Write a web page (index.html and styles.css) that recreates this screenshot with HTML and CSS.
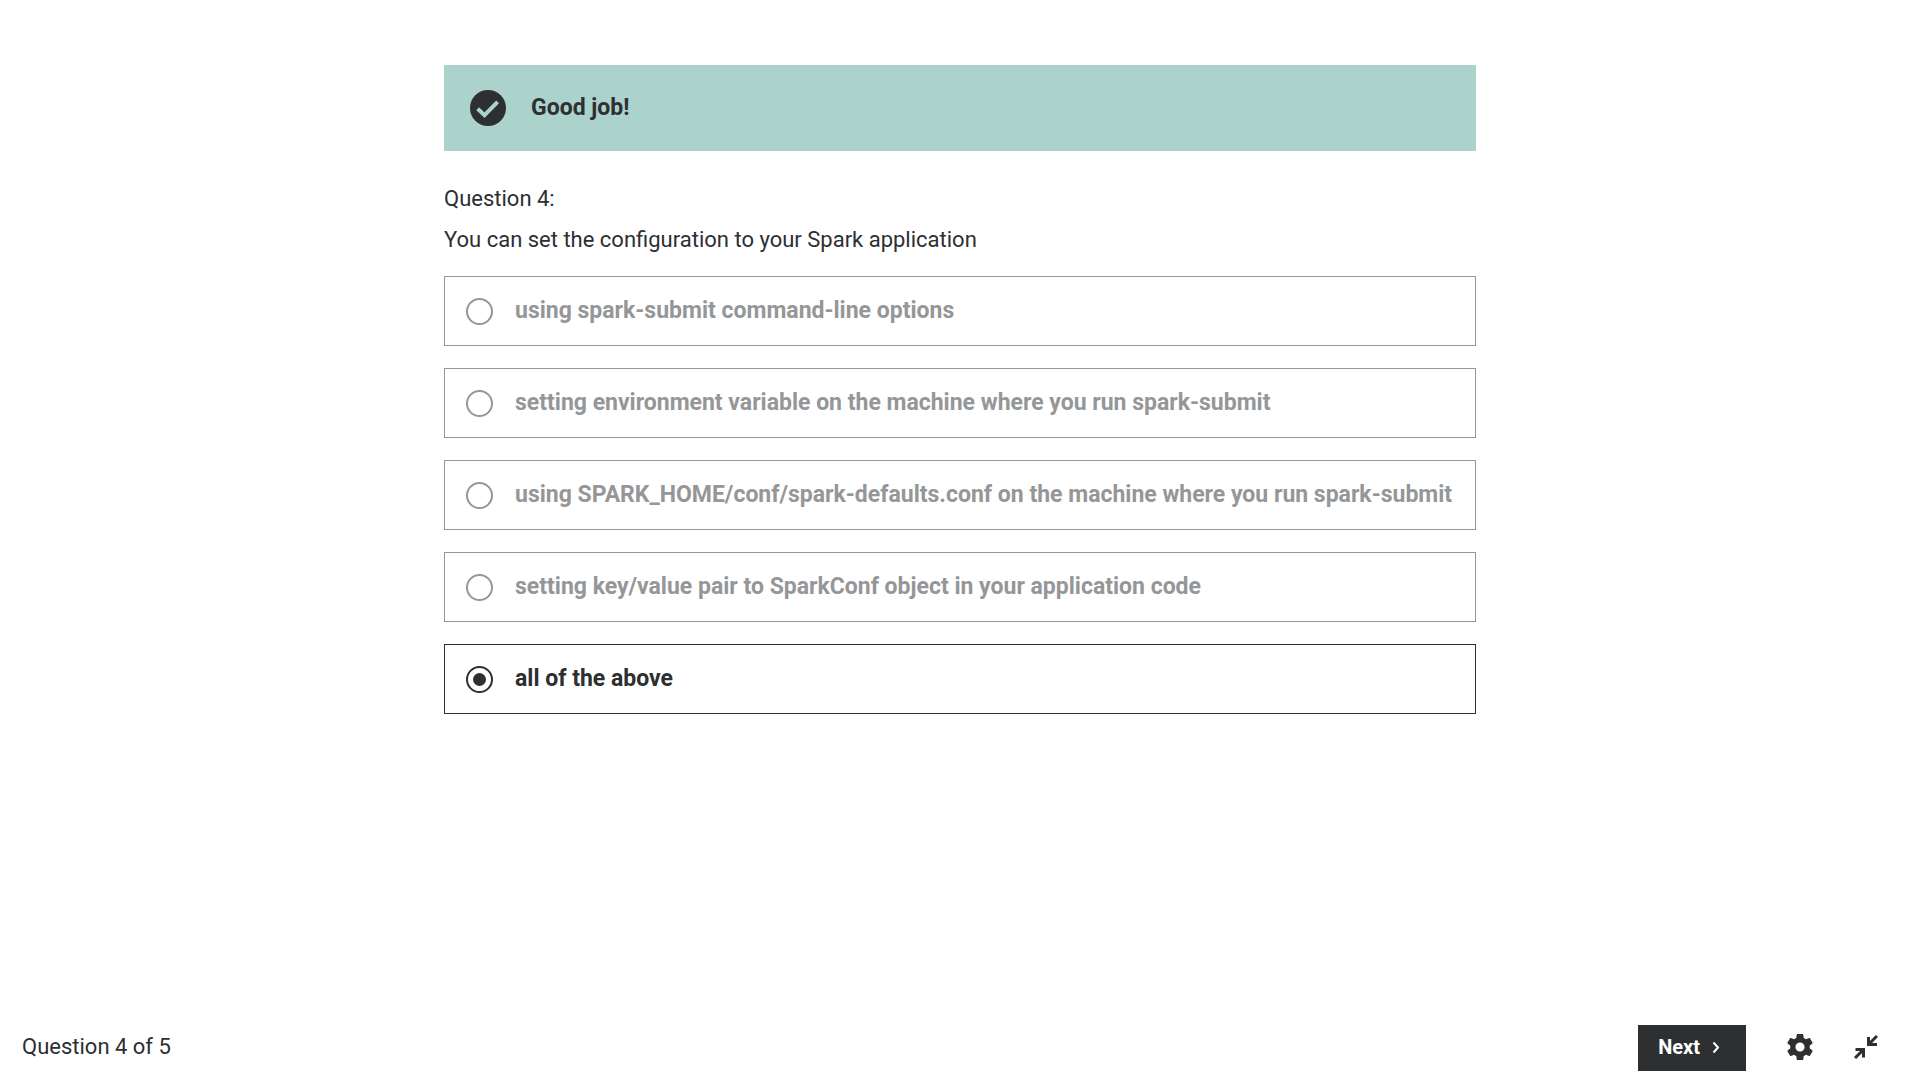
FILE: index.html
```html
<!DOCTYPE html>
<html lang="en">
<head>
<meta charset="utf-8">
<meta name="viewport" content="width=device-width, initial-scale=1">
<title>Question 4 of 5</title>
<link rel="stylesheet" href="styles.css">
</head>
<body>
<main class="quiz">
  <div class="feedback" role="status">
    <svg class="feedback-icon" viewBox="0 0 36 36" aria-hidden="true">
      <circle cx="18" cy="18" r="18" fill="currentColor"/>
      <path class="feedback-tick" d="M7.700 18.800l6.800 6.400L27.600 11.900"/>
    </svg>
    <p class="feedback-text">Good job!</p>
  </div>
  <form class="question">
    <p class="prompt">Question 4:</p>
    <p class="prompt" id="prompt">You can set the configuration to your Spark application</p>
    <div class="options" role="radiogroup" aria-labelledby="prompt">
      <label class="option"><input class="radio" type="radio" name="answer" disabled><span>using spark-submit command-line options</span></label>
      <label class="option"><input class="radio" type="radio" name="answer" disabled><span>setting environment variable on the machine where you run spark-submit</span></label>
      <label class="option"><input class="radio" type="radio" name="answer" disabled><span>using SPARK_HOME/conf/spark-defaults.conf on the machine where you run spark-submit</span></label>
      <label class="option"><input class="radio" type="radio" name="answer" disabled><span>setting key/value pair to SparkConf object in your application code</span></label>
      <label class="option option-selected"><input class="radio" type="radio" name="answer" checked><span>all of the above</span></label>
    </div>
  </form>
</main>
<footer class="toolbar">
  <p class="progress">Question 4 of 5</p>
  <div class="actions">
    <button class="next" type="button">Next
      <svg class="chevron" viewBox="0 0 16 16" aria-hidden="true"><path d="M5.500 3.500L10 8.500l-4.500 5"/></svg>
    </button>
    <button class="icon-button" type="button" aria-label="Settings">
      <svg class="gear" viewBox="2 2 20 20" aria-hidden="true"><path fill="currentColor" d="M19.430 12.980c.04-.32.07-.64.07-.98s-.03-.66-.07-.98l2.110-1.650c.19-.15.24-.42.12-.64l-2-3.460c-.12-.22-.39-.3-.61-.22l-2.490 1c-.52-.4-1.080-.73-1.690-.98l-.38-2.650C14.460 2.180 14.250 2 14 2h-4c-.25 0-.46.18-.49.42l-.38 2.650c-.61.25-1.170.59-1.690.98l-2.490-1c-.23-.09-.49 0-.61.22l-2 3.460c-.13.22-.07.49.12.64l2.110 1.650c-.04.32-.07.65-.07.98s.03.66.07.98l-2.110 1.650c-.19.15-.24.42-.12.64l2 3.460c.12.22.39.3.61.22l2.490-1c.52.4 1.080.73 1.690.98l.38 2.650c.03.24.24.42.49.42h4c.25 0 .46-.18.49-.42l.38-2.650c.61-.25 1.170-.59 1.690-.98l2.490 1c.23.09.49 0 .61-.22l2-3.460c.12-.22.07-.49-.12-.64l-2.110-1.650zM12 15.500c-1.930 0-3.500-1.570-3.500-3.500s1.570-3.500 3.500-3.500 3.500 1.570 3.500 3.500-1.570 3.500-3.500 3.500z"/></svg>
    </button>
    <button class="icon-button" type="button" aria-label="Exit full screen">
      <svg class="collapse" viewBox="0 0 24 24" aria-hidden="true"><path d="M23 1l-8 8M14.500 2v7.500H23M1 23l8-8M1.500 14.500H9.500V22.500"/></svg>
    </button>
  </div>
</footer>
</body>
</html>
```
FILE: styles.css
```css
* { box-sizing: border-box; }

body {
  display: flex;
  flex-direction: column;
  min-height: 100vh;
  margin: 0;
  background: #fff;
  color: #2d2f31;
  font-family: Roboto, "Liberation Sans", sans-serif;
  font-size: 22px;
  line-height: 32px;
}

p { margin: 0; }

.quiz {
  flex: 1;
  width: 100%;
  max-width: 1032px;
  margin: 0 auto;
  padding: 65px 0 32px;
}

.feedback {
  display: flex;
  align-items: center;
  gap: 25px;
  padding: 25px 26px;
  background: #acd2cc;
  font-size: 23px;
  font-weight: 700;
}

.feedback-icon { width: 36px; height: 36px; }

.feedback-tick {
  fill: none;
  stroke: #acd2cc;
  stroke-width: 4;
}

.question { padding-top: 32px; }

.prompt { margin-bottom: 9px; }

.options {
  display: flex;
  flex-direction: column;
  gap: 22px;
  padding-top: 11px;
}

.option {
  display: flex;
  align-items: center;
  gap: 22px;
  padding: 18px 21px;
  border: 1px solid #959697;
  color: #959697;
  font-size: 23px;
  font-weight: 700;
}

.option-selected {
  border-color: #2d2f31;
  color: #2d2f31;
}

.radio {
  flex: none;
  appearance: none;
  display: grid;
  place-content: center;
  width: 27px;
  height: 27px;
  margin: 0;
  border: 2px solid currentColor;
  border-radius: 50%;
  color: inherit;
}

.radio:checked::before {
  content: "";
  width: 13px;
  height: 13px;
  border-radius: 50%;
  background: currentColor;
}

.toolbar {
  display: flex;
  align-items: flex-start;
  justify-content: space-between;
  padding: 8px 42px 8px 22px;
}

.progress { line-height: 44px; }

.actions {
  display: flex;
  align-items: flex-start;
  gap: 41px;
}

button {
  border: 0;
  padding: 0;
  background: none;
  color: inherit;
  font: inherit;
}

.next {
  display: flex;
  align-items: center;
  gap: 8px;
  padding: 6px 22px 8px 20px;
  background: #2d2f31;
  color: #fff;
  font-size: 20px;
  font-weight: 700;
}

.chevron { width: 16px; height: 16px; }

.chevron path {
  fill: none;
  stroke: currentColor;
  stroke-width: 2;
}

.icon-button {
  display: flex;
  align-items: center;
  height: 44px;
}

.gear { width: 26px; height: 26px; }

.collapse { width: 24px; height: 24px; }

.collapse path {
  fill: none;
  stroke: currentColor;
  stroke-width: 3;
}
```
